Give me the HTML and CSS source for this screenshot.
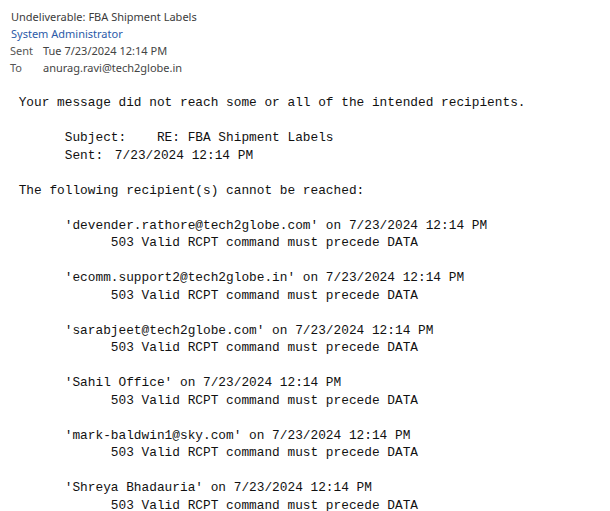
FILE: index.html
```html
<!DOCTYPE html>
<html>
<head>
<meta charset="utf-8">
<link rel="stylesheet" href="styles.css">
</head>
<body>
<div class="header">
  <div class="subject">Undeliverable: FBA Shipment Labels</div>
  <div class="sender">System Administrator</div>
  <div class="meta"><span class="label">Sent</span><span class="value">Tue 7/23/2024 12:14 PM</span></div>
  <div class="meta"><span class="label">To</span><span class="value">anurag.ravi@tech2globe.in</span></div>
</div>
<pre class="body"> Your message did not reach some or all of the intended recipients.

       Subject:    RE: FBA Shipment Labels
       Sent: <span class="sent-date">7/23/2024 12:14 PM</span>

 The following recipient(s) cannot be reached:

       'devender.rathore@tech2globe.com' on 7/23/2024 12:14 PM
             503 Valid RCPT command must precede DATA

       'ecomm.support2@tech2globe.in' on 7/23/2024 12:14 PM
             503 Valid RCPT command must precede DATA

       'sarabjeet@tech2globe.com' on 7/23/2024 12:14 PM
             503 Valid RCPT command must precede DATA

       'Sahil Office' on 7/23/2024 12:14 PM
             503 Valid RCPT command must precede DATA

       'mark-baldwin1@sky.com' on 7/23/2024 12:14 PM
             503 Valid RCPT command must precede DATA

       'Shreya Bhadauria' on 7/23/2024 12:14 PM
             503 Valid RCPT command must precede DATA</pre>
</body>
</html>
```

FILE: styles.css
```css
html, body {
  margin: 0;
  padding: 0;
  background: #ffffff;
  overflow: hidden;
}

.header {
  padding: 8px 0 0 10px;
  font-family: "Noto Sans", "Open Sans", sans-serif;
  font-size: 11px;
  line-height: 17px;
  color: #3b3b3b;
}

.subject {
  padding-left: 1px;
}

.sender {
  color: #2b5aa8;
  padding-left: 1px;
}

.meta {
  display: flex;
  color: #555555;
}

.meta .label {
  width: 33px;
}

.meta .value {
  color: #444444;
}

.body {
  margin: 18px 0 0 11px;
  font-family: "Liberation Mono", "DejaVu Sans Mono", monospace;
  font-size: 12.8px;
  line-height: 17.5px;
  color: #111111;
}

.sent-date {
  margin-left: 4px;
}
```
